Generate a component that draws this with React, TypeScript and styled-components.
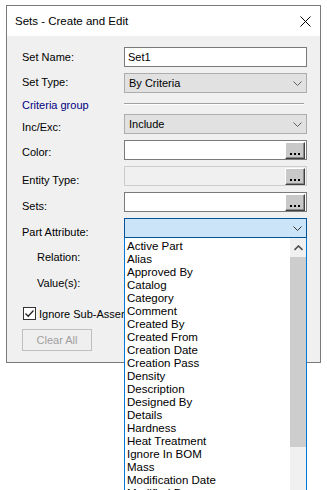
import * as React from 'react';
import styled, { createGlobalStyle } from 'styled-components';

const GlobalStyle = createGlobalStyle`
  html, body {
    margin: 0;
    padding: 0;
    background: #ffffff;
  }
  body {
    font-family: "Liberation Sans", Arial, sans-serif;
    font-size: 11px;
    color: #000000;
  }
`;

const Page = styled.div`
  box-sizing: border-box;
  height: 490px;
  overflow: hidden;
  padding: 5px 0 0 6px;
`;

const Window = styled.div`
  width: 313px;
  border: 1px solid #7a7a7a;
  background: #f0f0f0;
`;

const TitleBar = styled.div`
  height: 30px;
  background: #ffffff;
  display: flex;
  align-items: center;
  justify-content: space-between;
  padding: 0 9px 0 8px;
  font-size: 11.5px;
`;

const Body = styled.div`
  display: flex;
  flex-direction: column;
  align-items: flex-start;
  padding: 11px 13px 11px 15px;
`;

const FormGrid = styled.div`
  display: grid;
  grid-template-columns: 102px 183px;
  grid-template-rows: 20px 20px 9px repeat(7, 20px);
  row-gap: 6px;
`;

const Label = styled.div<{ $top: number; $indent?: number }>`
  padding-top: ${({ $top }) => $top}px;
  padding-left: ${({ $indent }) => $indent ?? 0}px;
  line-height: 13px;
  white-space: nowrap;
`;

const GroupLabel = styled.div`
  color: #000080;
  line-height: 13px;
  white-space: nowrap;
`;

const GroupLine = styled.div`
  align-self: center;
  width: 180px;
  border-top: 1px solid #a0a0a0;
  border-bottom: 1px solid #ffffff;
`;

const Cell = styled.div`
  position: relative;
`;

const TextBox = styled.div<{ $disabled?: boolean }>`
  box-sizing: border-box;
  height: 20px;
  display: flex;
  align-items: center;
  padding-left: 3px;
  background: ${({ $disabled }) => ($disabled ? '#f0f0f0' : '#ffffff')};
  border: 1px solid ${({ $disabled }) => ($disabled ? '#cccccc' : '#7a7a7a')};
`;

const Select = styled.div<{ $active?: boolean }>`
  box-sizing: border-box;
  height: 20px;
  display: flex;
  align-items: center;
  justify-content: space-between;
  padding: 0 4px 0 4px;
  background: ${({ $active }) => ($active ? '#cce4f7' : '#e1e1e1')};
  border: 1px solid ${({ $active }) => ($active ? '#005499' : '#adadad')};
`;

const BrowseButton = styled.div`
  box-sizing: border-box;
  margin-left: auto;
  margin-right: 1px;
  width: 20px;
  height: 17px;
  background: #c8c8c8;
  border-style: solid;
  border-width: 1px;
  border-color: #ffffff #404040 #404040 #ffffff;
  box-shadow: inset -1px -1px 0 #8a8a8a;
  display: flex;
  align-items: flex-end;
  justify-content: center;
  gap: 2px;
  padding-bottom: 3px;
`;

const Dot = styled.span`
  width: 2px;
  height: 2px;
  background: #000000;
`;

const DropList = styled.div`
  position: absolute;
  top: 20px;
  left: 0;
  z-index: 2;
  box-sizing: border-box;
  width: 183px;
  display: flex;
  background: #ffffff;
  border: 1px solid #0078d7;
  border-top: none;
`;

const Items = styled.div`
  flex: 1;
  padding: 2px 0 0 2px;
`;

const Item = styled.div`
  height: 13px;
  line-height: 13px;
  font-size: 11.5px;
  white-space: nowrap;
`;

const ScrollBar = styled.div`
  width: 16px;
  background: #f0f0f0;
  display: flex;
  flex-direction: column;
`;

const ScrollArrow = styled.div`
  height: 19px;
  display: flex;
  align-items: center;
  justify-content: center;
`;

const ScrollThumb = styled.div`
  height: 190px;
  background: #cdcdcd;
`;

const CheckRow = styled.label`
  margin-top: 17px;
  margin-left: 1px;
  display: flex;
  align-items: center;
  gap: 3px;
  white-space: nowrap;
`;

const CheckText = styled.span`
  width: 86px;
  overflow: hidden;
`;

const CheckBox = styled.span`
  box-sizing: border-box;
  width: 13px;
  height: 13px;
  border: 1px solid #333333;
  background: #ffffff;
  display: flex;
  align-items: center;
  justify-content: center;
`;

const PlainButton = styled.div`
  box-sizing: border-box;
  margin-top: 9px;
  width: 70px;
  height: 22px;
  display: flex;
  align-items: center;
  justify-content: center;
  background: #efefef;
  border: 1px solid #bfbfbf;
  color: #a0a0a0;
`;

const Chevron = ({ dark }: { dark?: boolean }) => (
  <svg width="9" height="5" viewBox="0 0 9 5">
    <path d="M0.5 0.5 L4.5 4.5 L8.5 0.5" fill="none" stroke={dark ? '#333' : '#606060'} strokeWidth="1" />
  </svg>
);

const Browse = () => (
  <BrowseButton>
    <Dot />
    <Dot />
    <Dot />
  </BrowseButton>
);

const attributes = [
  'Active Part',
  'Alias',
  'Approved By',
  'Catalog',
  'Category',
  'Comment',
  'Created By',
  'Created From',
  'Creation Date',
  'Creation Pass',
  'Density',
  'Description',
  'Designed By',
  'Details',
  'Hardness',
  'Heat Treatment',
  'Ignore In BOM',
  'Mass',
  'Modification Date',
  'Modified By',
];

export default function App() {
  return (
    <Page>
      <GlobalStyle />
      <Window>
        <TitleBar>
          <span>Sets - Create and Edit</span>
          <svg width="11" height="11" viewBox="0 0 11 11">
            <path d="M0.5 0.5 L10.5 10.5 M10.5 0.5 L0.5 10.5" stroke="#000" strokeWidth="1" />
          </svg>
        </TitleBar>
        <Body>
          <FormGrid>
            <Label $top={4}>Set Name:</Label>
            <TextBox>Set1</TextBox>

            <Label $top={3}>Set Type:</Label>
            <Select>
              <span>By Criteria</span>
              <Chevron />
            </Select>

            <GroupLabel>Criteria group</GroupLabel>
            <GroupLine />

            <Label $top={7}>Inc/Exc:</Label>
            <Select>
              <span>Include</span>
              <Chevron />
            </Select>

            <Label $top={6}>Color:</Label>
            <TextBox>
              <Browse />
            </TextBox>

            <Label $top={8}>Entity Type:</Label>
            <TextBox $disabled>
              <Browse />
            </TextBox>

            <Label $top={8}>Sets:</Label>
            <TextBox>
              <Browse />
            </TextBox>

            <Label $top={8}>Part Attribute:</Label>
            <Cell>
              <Select $active>
                <span />
                <Chevron dark />
              </Select>
              <DropList>
                <Items>
                  {attributes.map((a) => (
                    <Item key={a}>{a}</Item>
                  ))}
                </Items>
                <ScrollBar>
                  <ScrollArrow>
                    <svg width="9" height="6" viewBox="0 0 9 6">
                      <path d="M0.5 5 L4.5 1 L8.5 5" fill="none" stroke="#505050" strokeWidth="1.6" />
                    </svg>
                  </ScrollArrow>
                  <ScrollThumb />
                </ScrollBar>
              </DropList>
            </Cell>

            <Label $top={7} $indent={15}>Relation:</Label>
            <div />

            <Label $top={7} $indent={15}>Value(s):</Label>
            <div />
          </FormGrid>

          <CheckRow>
            <CheckBox>
              <svg width="11" height="11" viewBox="0 0 11 11">
                <path d="M1.5 5.5 L4.2 8.2 L9.5 2.5" fill="none" stroke="#222" strokeWidth="1.3" />
              </svg>
            </CheckBox>
            <CheckText>Ignore Sub-Assemblies</CheckText>
          </CheckRow>

          <PlainButton>Clear All</PlainButton>
        </Body>
      </Window>
    </Page>
  );
}
